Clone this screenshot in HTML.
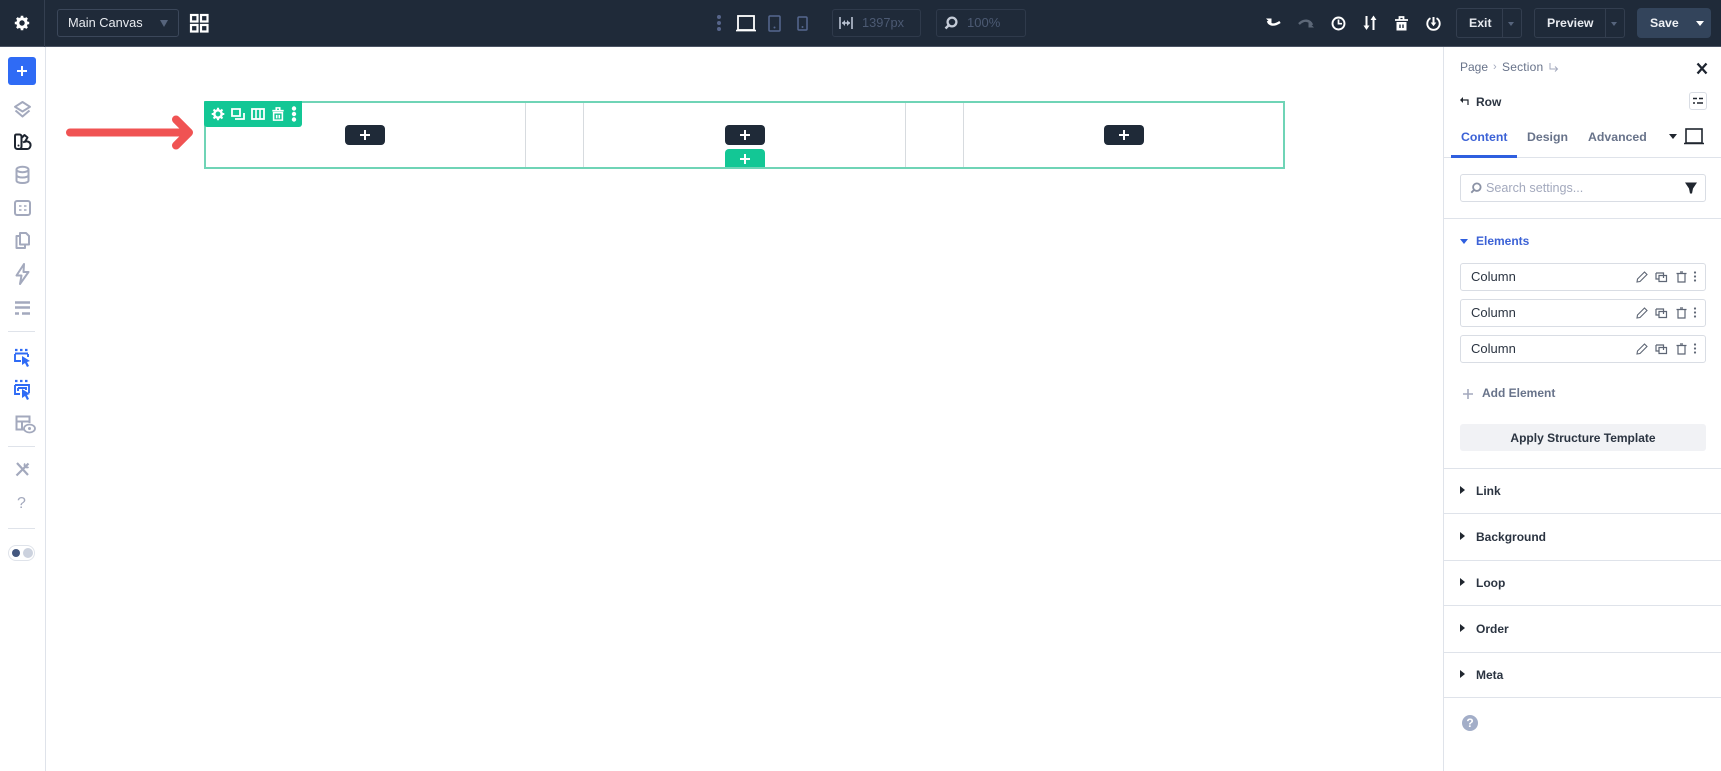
<!DOCTYPE html>
<html><head><meta charset="utf-8"><style>
*{box-sizing:border-box}
html,body{margin:0;padding:0;width:1721px;height:771px;overflow:hidden;background:#fff;font-family:"Liberation Sans",sans-serif}
.a{position:absolute}
.t{position:absolute;white-space:nowrap;line-height:16px;font-size:13px}
svg{position:absolute;overflow:visible;fill:none}
.hl{position:absolute;left:1444px;width:277px;height:1px;background:#dfe3ea}
.col{position:absolute;left:1460px;width:246px;height:28px;border:1px solid #d9dde4;border-radius:3px}
.plus{position:absolute;width:40px;height:20px;background:#1f2a38;border-radius:4px;top:125px}
.plus:before{content:"";position:absolute;left:15px;top:9px;width:10px;height:2px;background:#fff}
.plus:after{content:"";position:absolute;left:19px;top:5px;width:2px;height:10px;background:#fff}
.sec{font-weight:bold;color:#2b3441;left:1476px;font-size:12px}
.tri{position:absolute;left:1460px;width:0;height:0;border-left:5.5px solid #20262f;border-top:4.5px solid transparent;border-bottom:4.5px solid transparent}
</style></head><body>

<!-- top bar -->
<div class="a" style="left:0;top:0;width:1721px;height:47px;background:#1f2a39;border-bottom:1px solid #4a5363"></div>
<div class="a" style="left:44px;top:0;width:1px;height:47px;background:#343f50"></div>
<div class="a" style="left:45px;top:47px;width:1px;height:724px;background:#dfe3ea"></div>

<!-- gear -->
<svg style="left:14px;top:15px" width="16" height="16" viewBox="0 0 16 16"><circle cx="8" cy="8" r="4.2" stroke="#fff" stroke-width="3"/><path d="M8 .8V3M8 13v2.2M.8 8H3M13 8h2.2M2.9 2.9l1.6 1.6M11.5 11.500l1.6 1.6M2.9 13.100l1.6-1.6M11.500 4.500l1.600-1.600" stroke="#fff" stroke-width="2.600"/></svg>

<div class="a" style="left:57px;top:9px;width:122px;height:28px;border:1px solid #3b475a;border-radius:3px"></div>
<div class="t" style="left:68px;top:15px;color:#e8ebf0;font-size:12.800px">Main Canvas</div>
<div class="a" style="left:160px;top:20px;border-top:7px solid #56647c;border-left:4.500px solid transparent;border-right:4.500px solid transparent"></div>
<svg style="left:190px;top:14px" width="19" height="19" viewBox="0 0 19 19"><g stroke="#fff" stroke-width="2.200"><rect x="1" y="1" width="6.500" height="6.500"/><rect x="11" y="1" width="6.500" height="6.500"/><rect x="1" y="11" width="6.500" height="6.500"/><rect x="11" y="11" width="6.500" height="6.500"/></g></svg>

<!-- center controls -->
<svg style="left:716px;top:14px" width="6" height="18" viewBox="0 0 6 18"><g fill="#56658a"><circle cx="3" cy="3" r="2"/><circle cx="3" cy="9" r="2"/><circle cx="3" cy="15" r="2"/></g></svg>
<svg style="left:736px;top:15px" width="20" height="17" viewBox="0 0 20 17"><rect x="2" y="1" width="16" height="14" stroke="#fff" stroke-width="1.800"/><path d="M0 15.600h20" stroke="#fff" stroke-width="1.600"/></svg>
<svg style="left:768px;top:15px" width="13" height="17" viewBox="0 0 13 17"><rect x="1" y="1" width="11" height="15" rx="1" stroke="#56688f" stroke-width="1.500"/><circle cx="6.500" cy="12.500" r="1" fill="#56688f"/></svg>
<svg style="left:797px;top:16px" width="11" height="15" viewBox="0 0 11 15"><rect x="1" y="1" width="9" height="13" rx="1" stroke="#56688f" stroke-width="1.500"/><circle cx="5.500" cy="11" r="1" fill="#56688f"/></svg>
<div class="a" style="left:832px;top:9px;width:89px;height:28px;border:1px solid #2f3a4b;border-radius:3px"></div>
<svg style="left:839px;top:16px" width="14" height="14" viewBox="0 0 14 14"><path d="M1 1v12M13 1v12M3 7h8" stroke="#b9c2d2" stroke-width="1.600"/><path d="M3 7l3-3v6zM11 7L8 4v6z" fill="#b9c2d2"/></svg>
<div class="t" style="left:862px;top:15px;color:#4c5a73;font-size:12.800px">1397px</div>
<div class="a" style="left:936px;top:9px;width:90px;height:28px;border:1px solid #2f3a4b;border-radius:3px"></div>
<svg style="left:944px;top:16px" width="14" height="14" viewBox="0 0 14 14"><circle cx="8" cy="6" r="4.400" stroke="#c5ccd8" stroke-width="2.300"/><path d="M4.500 9.500L1.500 12.500" stroke="#c5ccd8" stroke-width="2.400"/></svg>
<div class="t" style="left:967px;top:15px;color:#4c5a73">100%</div>

<!-- right controls -->
<svg style="left:1266px;top:17px" width="16" height="12" viewBox="0 0 16 12"><path d="M2 4c1 4 6 5 12 1" stroke="#fff" stroke-width="2.400"/><path d="M0 1.500h5.500V7z" fill="#fff"/></svg>
<svg style="left:1298px;top:17px" width="16" height="12" viewBox="0 0 16 12"><path d="M14 8C12 3 6 2 1 7" stroke="#5d6878" stroke-width="2.400"/><path d="M16 10.500h-5.500V5z" fill="#5d6878"/></svg>
<svg style="left:1331px;top:16px" width="15" height="15" viewBox="0 0 15 15"><circle cx="7.500" cy="7.500" r="6" stroke="#fff" stroke-width="1.900"/><path d="M7.500 3.500v4.200h3.500" stroke="#fff" stroke-width="1.700"/></svg>
<svg style="left:1363px;top:15px" width="14" height="16" viewBox="0 0 14 16"><path d="M3.500 1v11M10.500 15V4" stroke="#fff" stroke-width="2"/><path d="M.5 10.500h6L3.500 15zM7.500 5h6l-3-4.500z" fill="#fff"/></svg>
<svg style="left:1395px;top:16px" width="13" height="15" viewBox="0 0 13 15"><path d="M0 4h13M4.500 3.500V1h4v2.500" stroke="#fff" stroke-width="1.800"/><rect x="1.500" y="6" width="10" height="8.500" fill="#fff"/><path d="M5 8.500v3.500M8 8.500v3.500" stroke="#1f2a39" stroke-width="1.400"/></svg>
<svg style="left:1426px;top:16px" width="15" height="15" viewBox="0 0 15 15"><path d="M4.500 2.200a6.200 6.200 0 1 0 6 0" stroke="#fff" stroke-width="1.900"/><path d="M7.500 1v6" stroke="#fff" stroke-width="2"/><path d="M4.700 6.500h5.600L7.500 10.200z" fill="#fff"/></svg>

<div class="a" style="left:1456px;top:8px;width:66px;height:30px;border:1px solid #333e4f;border-radius:3px"></div>
<div class="a" style="left:1502px;top:8px;width:1px;height:30px;background:#333e4f"></div>
<div class="t" style="left:1469px;top:15px;color:#e8ebf0;font-weight:bold;font-size:12.300px">Exit</div>
<div class="a" style="left:1508px;top:22px;border-top:4px solid #56647c;border-left:3.500px solid transparent;border-right:3.500px solid transparent"></div>
<div class="a" style="left:1534px;top:8px;width:91px;height:30px;border:1px solid #333e4f;border-radius:3px"></div>
<div class="a" style="left:1605px;top:8px;width:1px;height:30px;background:#333e4f"></div>
<div class="t" style="left:1547px;top:15px;color:#e8ebf0;font-weight:bold;font-size:12.300px">Preview</div>
<div class="a" style="left:1611px;top:22px;border-top:4px solid #56647c;border-left:3.500px solid transparent;border-right:3.500px solid transparent"></div>
<div class="a" style="left:1637px;top:8px;width:74px;height:30px;background:#33445b;border-radius:4px"></div>
<div class="t" style="left:1650px;top:15px;color:#f0f2f5;font-weight:bold;font-size:12.300px">Save</div>
<div class="a" style="left:1696px;top:21px;border-top:5px solid #fff;border-left:4px solid transparent;border-right:4px solid transparent"></div>

<!-- left sidebar -->
<div class="a" style="left:8px;top:57px;width:28px;height:28px;background:#2f6bf5;border-radius:3px"></div>
<div class="a" style="left:17px;top:70px;width:10px;height:2px;background:#fff"></div>
<div class="a" style="left:21px;top:66px;width:2px;height:10px;background:#fff"></div>
<svg style="left:14px;top:101px" width="17" height="17" viewBox="0 0 17 17"><path d="M8.500 1L16 5.800 8.500 10.500 1 5.800zM1.500 9.500L8.500 15.500l7-6" stroke="#a3a9bd" stroke-width="2" stroke-linejoin="round"/></svg>
<svg style="left:14px;top:133px" width="18" height="17" viewBox="0 0 18 17"><path d="M2.500 1.500h3c1.200 0 2 .8 2 2v10c0 1.500-1 2.500-2.500 2.500H3.500C2 16 1 15 1 13.500V3c0-1 .7-1.500 1.500-1.500zM7.500 5L10.500 2l3 2.500-3 5M9 9.500c2-1.500 5-1.500 6.500 0 2 2 1 6.500-2.500 6.500H5" stroke="#1e2530" stroke-width="2" stroke-linejoin="round"/><circle cx="4.500" cy="12.500" r="1" fill="#1e2530"/></svg>
<svg style="left:15px;top:166px" width="15" height="18" viewBox="0 0 15 18"><ellipse cx="7.500" cy="3.500" rx="6" ry="2.700" stroke="#a3a9bd" stroke-width="2"/><path d="M1.500 3.500v11c0 1.500 2.500 2.500 6 2.500s6-1 6-2.500v-11M1.500 9c0 1.500 2.500 2.500 6 2.500s6-1 6-2.500" stroke="#a3a9bd" stroke-width="2"/></svg>
<svg style="left:14px;top:200px" width="17" height="16" viewBox="0 0 17 16"><rect x="1" y="1" width="15" height="14" rx="2" stroke="#a3a9bd" stroke-width="2"/><path d="M5 6h2.500M10 6h2.500M5 10h2.500M10 10h2.500" stroke="#a3a9bd" stroke-width="1.600"/></svg>
<svg style="left:15px;top:232px" width="15" height="17" viewBox="0 0 15 17"><path d="M5 1h6l3 3v8.500H5zM5 4H1.500v12H10v-3.500" stroke="#a3a9bd" stroke-width="2" stroke-linejoin="round"/></svg>
<svg style="left:15px;top:263px" width="15" height="22" viewBox="0 0 15 22"><path d="M9 1L1.500 12.500H6.500L5 21l8.500-12H8.500z" stroke="#a3a9bd" stroke-width="2" stroke-linejoin="round"/></svg>
<svg style="left:15px;top:301px" width="15" height="14" viewBox="0 0 15 14"><path d="M0 1.500h15M0 6.500h15M0 12.500h4M7 12.500h8" stroke="#a3a9bd" stroke-width="2.400"/></svg>
<div class="a" style="left:8px;top:331px;width:27px;height:1px;background:#dfe3ea"></div>
<svg style="left:14px;top:347px" width="17" height="20" viewBox="0 0 17 20"><path d="M1 3h2.500M6 3h2.500M11 3h2.500" stroke="#2f6bf5" stroke-width="2.200"/><path d="M1 7V14h6M14 7v3M1 6.500h13" stroke="#2f6bf5" stroke-width="1.900"/><path d="M8 9l8 5-3 1 2 4-2 1-2-4-3 2z" fill="#2f6bf5"/></svg>
<svg style="left:14px;top:379px" width="17" height="21" viewBox="0 0 17 21"><path d="M1 2h2.500M6 2h2.500M11 2h2.500" stroke="#2f6bf5" stroke-width="2.200"/><path d="M1 6h14v8M1 6v9h5M4 9h8v2M4 9v3" stroke="#2f6bf5" stroke-width="1.900"/><path d="M8 10l8 5-3 1 2 4-2 1-2-4-3 2z" fill="#2f6bf5"/></svg>
<svg style="left:15px;top:415px" width="21" height="19" viewBox="0 0 21 19"><path d="M9 14.500H1.500V1.500h13V8M1.500 6.500h13M7 6.500v8" stroke="#a3a9bd" stroke-width="2"/><ellipse cx="14.500" cy="13.500" rx="5.500" ry="4" fill="#fff" stroke="#a3a9bd" stroke-width="1.800"/><circle cx="14.500" cy="13.500" r="1.500" fill="#a3a9bd"/></svg>
<div class="a" style="left:8px;top:446px;width:27px;height:1px;background:#dfe3ea"></div>
<svg style="left:15px;top:462px" width="15" height="15" viewBox="0 0 15 15"><path d="M2 1l11 12M13.500 1.500L1.500 13.500" stroke="#a3a9bd" stroke-width="2.200"/><path d="M10 1.500a2.500 2.500 0 0 0 3.500 3.500" stroke="#a3a9bd" stroke-width="1.800"/></svg>
<div class="t" style="left:17px;top:496px;color:#a3a9bd;font-size:16px;line-height:16px">?</div>
<div class="a" style="left:8px;top:528px;width:27px;height:1px;background:#dfe3ea"></div>
<div class="a" style="left:8px;top:545px;width:27px;height:16px;border:1px solid #dfe3ea;border-radius:8px"></div>
<div class="a" style="left:12px;top:549px;width:8px;height:8px;border-radius:50%;background:#44587f"></div>
<div class="a" style="left:23px;top:548px;width:10px;height:10px;border-radius:50%;background:#ccd2de"></div>

<!-- arrow -->
<svg style="left:66px;top:114px" width="130" height="38" viewBox="0 0 130 38"><path d="M4 18.500H123M110 5.500L123 18.500 110 31.500" stroke="#f05353" stroke-width="8" stroke-linecap="round" stroke-linejoin="round"/></svg>

<!-- row -->
<div class="a" style="left:204px;top:101px;width:1081px;height:68px;border:2px solid #6fd4b6"></div>
<div class="a" style="left:525px;top:103px;width:1px;height:64px;background:#d7dbdf"></div>
<div class="a" style="left:583px;top:103px;width:1px;height:64px;background:#d7dbdf"></div>
<div class="a" style="left:905px;top:103px;width:1px;height:64px;background:#d7dbdf"></div>
<div class="a" style="left:963px;top:103px;width:1px;height:64px;background:#d7dbdf"></div>
<div class="a" style="left:204px;top:101px;width:98px;height:26px;background:#13c795;border-radius:2px 0 3px 3px"></div>
<svg style="left:211px;top:107px" width="14" height="14" viewBox="0 0 16 16"><circle cx="8" cy="8" r="4.200" stroke="#fff" stroke-width="2.800"/><path d="M8 .8V3M8 13v2.200M.8 8H3M13 8h2.200M2.900 2.900l1.600 1.600M11.500 11.500l1.600 1.600M2.900 13.100l1.600-1.600M11.500 4.500l1.600-1.600" stroke="#fff" stroke-width="2.400"/></svg>
<svg style="left:231px;top:108px" width="14" height="12" viewBox="0 0 14 12"><path d="M1 1h8v7H1zM13 5v6H4" stroke="#fff" stroke-width="1.800"/></svg>
<svg style="left:251px;top:108px" width="14" height="12" viewBox="0 0 14 12"><rect x="1" y="1" width="12" height="10" stroke="#fff" stroke-width="1.800"/><path d="M5 1v10M9 1v10" stroke="#fff" stroke-width="1.600"/></svg>
<svg style="left:272px;top:107px" width="12" height="14" viewBox="0 0 13 16"><path d="M0 4.200h13M4.500 3.500V1h4v2.500M1.500 6.500h10v8.500h-10zM5 9v4M8 9v4" stroke="#fff" stroke-width="1.800"/></svg>
<svg style="left:291px;top:106px" width="6" height="16" viewBox="0 0 6 16"><g fill="#fff"><circle cx="3" cy="2.500" r="2.200"/><circle cx="3" cy="8" r="2.200"/><circle cx="3" cy="13.500" r="2.200"/></g></svg>
<div class="plus" style="left:345px"></div>
<div class="plus" style="left:724.500px"></div>
<div class="plus" style="left:1104px"></div>
<div class="plus" style="left:724.500px;top:149px;height:18px;background:#13c795;border-radius:4px 4px 0 0"></div>

<!-- panel -->
<div class="a" style="left:1443px;top:47px;width:1px;height:724px;background:#dfe3ea"></div>
<div class="t" style="left:1460px;top:59px;font-size:12px;color:#68738a">Page</div>
<div class="t" style="left:1493px;top:59px;font-size:11px;color:#a3a9bd">›</div>
<div class="t" style="left:1502px;top:59px;font-size:12px;color:#68738a;letter-spacing:.2px">Section</div>
<svg style="left:1549px;top:63px" width="10" height="9" viewBox="0 0 10 9"><path d="M1 0v6h7M6 3.500L8.500 6 6 8.500" stroke="#a3a9bd" stroke-width="1"/></svg>
<svg style="left:1697px;top:63px" width="10" height="11" viewBox="0 0 10 11"><path d="M.5 .5l9 10M9.500 .5l-9 10" stroke="#1e2530" stroke-width="2.300"/></svg>
<svg style="left:1460px;top:97px" width="9" height="9" viewBox="0 0 9 9"><path d="M8 8V3H2" stroke="#20262f" stroke-width="1.200"/><path d="M3 0L0 3l3 3z" fill="#20262f"/></svg>
<div class="t" style="left:1476px;top:94px;font-weight:bold;color:#2b3441;font-size:12px">Row</div>
<div class="a" style="left:1689px;top:92px;width:18px;height:18px;border:1px solid #d9dde4;border-radius:3px"></div>
<svg style="left:1693px;top:97px" width="10" height="8" viewBox="0 0 10 8"><path d="M0 1.500h4M6 1.500h4M0 6h2M4 6h6" stroke="#20262f" stroke-width="1.500"/></svg>
<div class="t" style="left:1461px;top:129px;font-weight:bold;color:#3c62d6;font-size:12.300px">Content</div>
<div class="t" style="left:1527px;top:129px;font-weight:bold;color:#68738a;font-size:12.300px">Design</div>
<div class="t" style="left:1588px;top:129px;font-weight:bold;color:#68738a;font-size:12.300px">Advanced</div>
<div class="a" style="left:1669px;top:134px;border-top:5px solid #20262f;border-left:4px solid transparent;border-right:4px solid transparent"></div>
<svg style="left:1684px;top:128px" width="20" height="17" viewBox="0 0 20 17"><rect x="2" y="1" width="16" height="14" stroke="#20262f" stroke-width="1.600"/><path d="M0 15.500h20" stroke="#20262f" stroke-width="1.500"/></svg>
<div class="hl" style="top:157px"></div>
<div class="a" style="left:1451px;top:155px;width:66px;height:3px;background:#2f5fdf"></div>

<div class="a" style="left:1460px;top:174px;width:246px;height:28px;border:1px solid #d9dde4;border-radius:3px"></div>
<svg style="left:1470px;top:182px" width="12" height="12" viewBox="0 0 14 14"><circle cx="8" cy="6" r="4.400" stroke="#8b92a5" stroke-width="2.100"/><path d="M4.500 9.500L1.500 12.500" stroke="#8b92a5" stroke-width="2.200"/></svg>
<div class="t" style="left:1486px;top:180px;color:#a3a9bd;font-size:12.600px">Search settings...</div>
<svg style="left:1685px;top:182px" width="12" height="12" viewBox="0 0 12 12"><path d="M0 .5h12L8 6.500 7 11.500H5L4 6.500z" fill="#20262f"/></svg>
<div class="hl" style="top:218px"></div>

<div class="a" style="left:1460px;top:239px;border-top:5px solid #2f5fdf;border-left:4px solid transparent;border-right:4px solid transparent"></div>
<div class="t" style="left:1476px;top:233px;font-weight:bold;color:#3c62d6;font-size:12px">Elements</div>

<div class="col" style="top:263px"></div><div class="t" style="left:1471px;top:269px;color:#2b3441">Column</div>
<div class="col" style="top:299px"></div><div class="t" style="left:1471px;top:305px;color:#2b3441">Column</div>
<div class="col" style="top:335px"></div><div class="t" style="left:1471px;top:341px;color:#2b3441">Column</div>

<svg style="left:1636px;top:271px" width="68" height="12" viewBox="0 0 68 12"><path d="M1 11l.5-3L8.500 1l2.500 2.500L4 10.500z" stroke="#5e6675" stroke-width="1.100"/><path d="M20 2h7.500V7M23 4.500h7.500v6H23zM20 2v6h3" stroke="#5e6675" stroke-width="1.200"/><path d="M40.500 2.500h10M42 2.500v8.500h7V2.500M44 1h3" stroke="#5e6675" stroke-width="1.200"/><g fill="#5e6675"><circle cx="59" cy="1.500" r="1.100"/><circle cx="59" cy="5.500" r="1.100"/><circle cx="59" cy="9.500" r="1.100"/></g></svg>
<svg style="left:1636px;top:307px" width="68" height="12" viewBox="0 0 68 12"><path d="M1 11l.5-3L8.500 1l2.500 2.500L4 10.500z" stroke="#5e6675" stroke-width="1.100"/><path d="M20 2h7.500V7M23 4.500h7.500v6H23zM20 2v6h3" stroke="#5e6675" stroke-width="1.200"/><path d="M40.500 2.500h10M42 2.500v8.500h7V2.500M44 1h3" stroke="#5e6675" stroke-width="1.200"/><g fill="#5e6675"><circle cx="59" cy="1.500" r="1.100"/><circle cx="59" cy="5.500" r="1.100"/><circle cx="59" cy="9.500" r="1.100"/></g></svg>
<svg style="left:1636px;top:343px" width="68" height="12" viewBox="0 0 68 12"><path d="M1 11l.5-3L8.500 1l2.500 2.500L4 10.500z" stroke="#5e6675" stroke-width="1.100"/><path d="M20 2h7.500V7M23 4.500h7.500v6H23zM20 2v6h3" stroke="#5e6675" stroke-width="1.200"/><path d="M40.500 2.500h10M42 2.500v8.500h7V2.500M44 1h3" stroke="#5e6675" stroke-width="1.200"/><g fill="#5e6675"><circle cx="59" cy="1.500" r="1.100"/><circle cx="59" cy="5.500" r="1.100"/><circle cx="59" cy="9.500" r="1.100"/></g></svg>

<svg style="left:1463px;top:389px" width="10" height="10" viewBox="0 0 10 10"><path d="M5 0v10M0 5h10" stroke="#a3a9bd" stroke-width="1.600"/></svg>
<div class="t" style="left:1482px;top:385px;font-weight:bold;color:#68738a;font-size:12px">Add Element</div>
<div class="a" style="left:1460px;top:424px;width:246px;height:27px;background:#f1f2f5;border-radius:3px"></div>
<div class="t" style="left:1460px;width:246px;text-align:center;top:430px;font-weight:bold;color:#2b3441;font-size:12px">Apply Structure Template</div>
<div class="hl" style="top:468px"></div>

<div class="tri" style="top:486px"></div><div class="t sec" style="top:483px">Link</div>
<div class="hl" style="top:513px"></div>
<div class="tri" style="top:532px"></div><div class="t sec" style="top:529px">Background</div>
<div class="hl" style="top:560px"></div>
<div class="tri" style="top:578px"></div><div class="t sec" style="top:575px">Loop</div>
<div class="hl" style="top:605px"></div>
<div class="tri" style="top:624px"></div><div class="t sec" style="top:621px">Order</div>
<div class="hl" style="top:652px"></div>
<div class="tri" style="top:670px"></div><div class="t sec" style="top:667px">Meta</div>
<div class="hl" style="top:697px"></div>
<div class="a" style="left:1462px;top:715px;width:16px;height:16px;border-radius:50%;background:#a3aec8"></div>
<div class="t" style="left:1462px;width:16px;text-align:center;top:715px;font-size:12px;font-weight:bold;color:#fff">?</div>

</body></html>
